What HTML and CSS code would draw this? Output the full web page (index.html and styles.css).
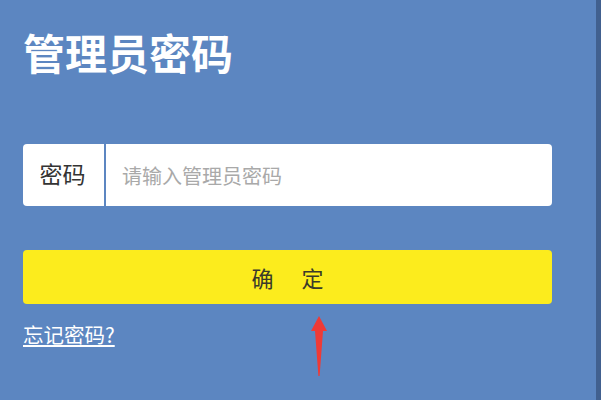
FILE: index.html
```html
<!DOCTYPE html>
<html lang="zh-CN">
<head>
  <meta charset="UTF-8" />
  <title>管理员密码</title>
  <link rel="stylesheet" href="styles.css">
</head>
<body>
  <div class="container">
    <h1>管理员密码</h1>

    <form class="login-form" id="loginForm">
      <div class="field">
        <label for="pwd">密码</label>
        <input type="password" id="pwd" name="pwd" placeholder="请输入管理员密码" />
      </div>

      <button type="submit" class="btn-confirm">确　定</button>
      <a href="#" class="forgot">忘记密码?</a>
    </form>
  </div>

  <!-- flèche rouge d'annotation -->
  <svg class="arrow" width="18" height="62" viewBox="0 0 18 62">
    <path d="M9 0 L17 15 L13 15 L9.6 60 L8.4 60 L5 15 L1 15 Z" fill="#ef3a36" />
  </svg>
</body>
</html>
```

FILE: styles.css
```css
body {
  font-family: "Noto Sans CJK SC", "Noto Sans", sans-serif;
  background: #5c86c1;
  margin: 0;
  min-height: 100vh;
  box-shadow: inset -5px 0 0 #41608f;
  position: relative;
}
.container {
  width: 529px;
  padding: 31px 0 0 23px;
}
h1 {
  margin: 0;
  font-size: 42px;
  line-height: 42px;
  font-weight: bold;
  color: #fff;
}
.login-form {
  margin-top: 71px;
  display: flex;
  flex-direction: column;
  align-items: flex-start;
}
.field {
  display: flex;
  width: 100%;
  height: 62px;
  background: #fff;
  border-radius: 4px;
  overflow: hidden;
}
.field label {
  width: 83px;
  flex-shrink: 0;
  display: flex;
  align-items: center;
  justify-content: center;
  font-size: 23px;
  color: #333;
  border-right: 2px solid #5c86c1;
  padding: 0 2px 4px 0;
  box-sizing: border-box;
}
.field input {
  flex: 1;
  border: none;
  outline: none;
  padding: 0 0 0 16px;
  font-family: inherit;
  font-size: 20px;
  color: #333;
  background: transparent;
}
.field input::placeholder {
  color: #a9a9a9;
}
.btn-confirm {
  margin-top: 44px;
  width: 100%;
  height: 54px;
  border: none;
  border-radius: 4px;
  background: #fcec1d;
  color: #3a3a2a;
  font-family: inherit;
  font-size: 22px;
  letter-spacing: 3px;
  text-indent: 3px;
  cursor: pointer;
}
.forgot {
  margin-top: 19px;
  font-size: 20.5px;
  line-height: 22px;
  color: #fff;
  text-decoration: underline;
  text-underline-offset: 2px;
}
.arrow {
  position: absolute;
  left: 310px;
  top: 316px;
}
```
